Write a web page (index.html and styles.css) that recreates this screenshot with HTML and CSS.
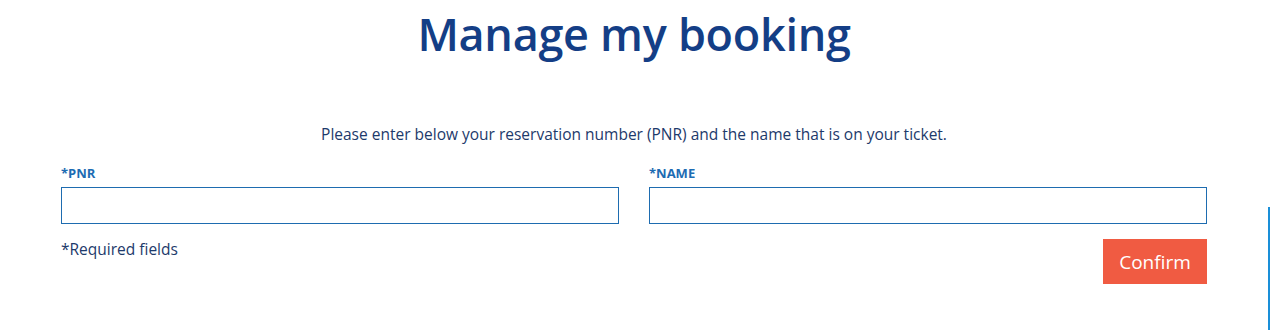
FILE: index.html
```html
<!DOCTYPE html>
<html lang="en">
<head>
<meta charset="utf-8">
<title>Manage my booking</title>
<link rel="stylesheet" href="styles.css">
</head>
<body>
<main class="page">
  <h1 class="title">Manage my booking</h1>
  <p class="intro">Please enter below your reservation number (PNR) and the name that is on your ticket.</p>
  <form class="form">
    <div class="fields">
      <div class="field">
        <label class="label" for="pnr">*PNR</label>
        <input class="input" id="pnr" type="text">
      </div>
      <div class="field">
        <label class="label" for="name">*NAME</label>
        <input class="input" id="name" type="text">
      </div>
    </div>
    <div class="actions">
      <span class="required">*Required fields</span>
      <button class="confirm" type="button">Confirm</button>
    </div>
  </form>
</main>
<div class="edge-line"></div>
</body>
</html>
```
FILE: styles.css
```css
html, body {
  margin: 0;
  padding: 0;
  background: #ffffff;
}
body {
  font-family: "Open Sans", "Noto Sans", sans-serif;
  color: #1d3a6b;
  position: relative;
  height: 330px;
  overflow: hidden;
}
.page {
  padding: 0 64px 0 61px;
}
.title {
  margin: 0;
  padding-top: 4px;
  text-align: center;
  font-size: 45px;
  line-height: 60px;
  font-weight: 600;
  color: #143e86;
  letter-spacing: -0.3px;
}
.intro {
  margin: 60px 0 0;
  text-align: center;
  font-size: 15.5px;
  line-height: 20px;
  color: #1d3a6b;
}
.form {
  margin-top: 20px;
}
.fields {
  display: grid;
  grid-template-columns: 1fr 1fr;
  column-gap: 30px;
}
.field {
  display: flex;
  flex-direction: column;
}
.label {
  font-size: 13px;
  font-weight: 700;
  line-height: 18px;
  color: #1d6cb3;
  margin-bottom: 5px;
}
.input {
  box-sizing: border-box;
  height: 37px;
  width: 100%;
  border: 1px solid #1e6cb0;
  border-radius: 0;
  margin: 0;
  padding: 0 10px;
  outline: none;
  background: #fff;
}
.actions {
  display: flex;
  justify-content: space-between;
  align-items: flex-start;
  margin-top: 15px;
}
.required {
  font-size: 15.5px;
  line-height: 20px;
  color: #1d3a6b;
}
.confirm {
  width: 104px;
  height: 45px;
  margin-top: 0;
  border: none;
  border-radius: 0;
  background: #f05b42;
  color: #ffffff;
  font-family: "Open Sans", "Noto Sans", sans-serif;
  font-size: 19px;
  padding: 0;
}
.edge-line {
  position: absolute;
  right: 1px;
  top: 207px;
  width: 2px;
  height: 130px;
  background: #1a8fd8;
}
```
